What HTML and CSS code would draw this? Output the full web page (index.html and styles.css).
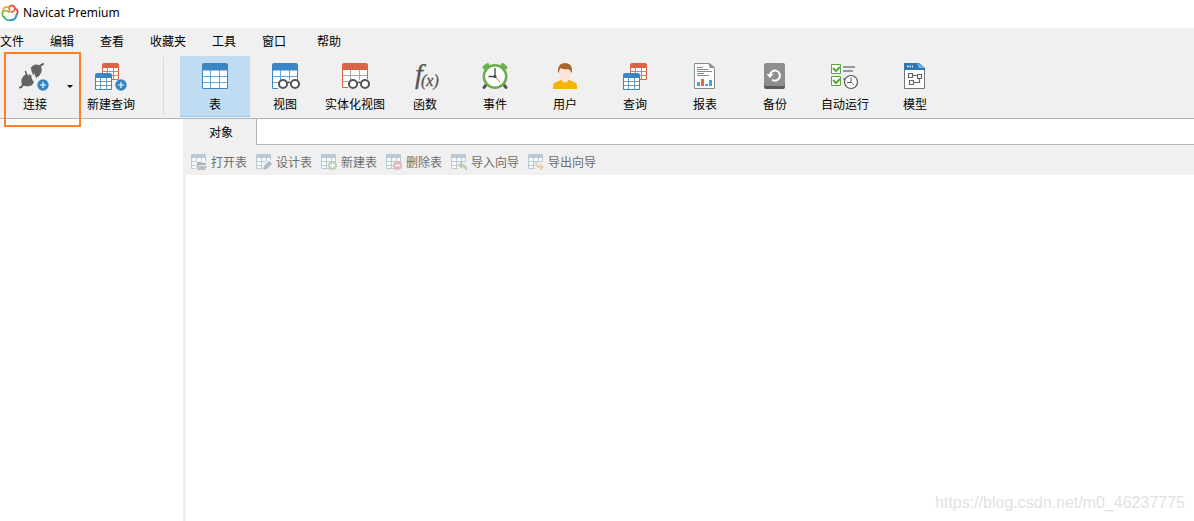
FILE: index.html
```html
<!DOCTYPE html>
<html lang="zh-CN">
<head>
<meta charset="utf-8">
<title>Navicat Premium</title>
<link rel="stylesheet" href="styles.css">
</head>
<body>
<svg class="sprite" aria-hidden="true">
  <symbol id="grid-blue" viewBox="0 0 26 26">
    <path fill="#fff" d="M0 2h26v24H0z"/>
    <path fill="none" stroke="#5babe2" d="M1 13.500h24M1 19.500h24M8.500 7v18M17.500 7v18"/>
    <path fill="none" stroke="#3b86c3" d="M.5 7v18.500h25V7"/>
    <path fill="#3b86c3" d="M0 7.500V2q0-2 2-2h22q2 0 2 2v5.500z"/>
  </symbol>
  <symbol id="mini-blue" viewBox="0 0 17 17">
    <path fill="#fff" d="M0 2h17v15H0z"/>
    <path fill="none" stroke="#4da2e0" d="M1 8.500h15M1 12.500h15M5.500 5v11M11.500 5v11"/>
    <path fill="none" stroke="#3b86c3" d="M.5 4v12.500h16V4"/>
    <path fill="#3b86c3" d="M0 5V2q0-2 2-2h13q2 0 2 2v3z"/>
  </symbol>
  <symbol id="mini-red" viewBox="0 0 17 17">
    <path fill="#fff" d="M0 2h17v15H0z"/>
    <path fill="none" stroke="#e07a5f" d="M1 8.500h15M1 12.500h15M5.500 5v11M11.500 5v11"/>
    <path fill="none" stroke="#d96445" d="M.5 4v12.500h16V4"/>
    <path fill="#d96445" d="M0 5V2q0-2 2-2h13q2 0 2 2v3z"/>
  </symbol>
  <symbol id="badge-plus" viewBox="0 0 12 12">
    <circle cx="6" cy="6" r="5.700" fill="#3385c6"/>
    <path stroke="#fff" stroke-width="1.200" d="M6 3v6M3 6h6"/>
  </symbol>
  <symbol id="glasses" viewBox="0 0 24 12">
    <g fill="#fff" stroke="#555" stroke-width="2"><circle cx="6" cy="6" r="4"/><circle cx="18" cy="6" r="4"/></g>
    <path fill="none" stroke="#555" stroke-width="1.500" d="M10 5q2-1.500 4 0M22 5h1M1 5h1"/>
  </symbol>
  <symbol id="grid-pale" viewBox="0 0 16 16">
    <path fill="#f7f8f9" d="M0 1h15v14H0z"/>
    <path fill="none" stroke="#bccad5" d="M.5 4v10.500H15M0 7.500h15M0 11.500h15M5.500 4v11M10.500 4v11M14.500 4v7"/>
    <path fill="#bccad5" d="M0 4V1q0-1 1-1h13q1 0 1 1v3z"/>
  </symbol>
</svg>

<header class="titlebar">
  <svg class="logo" viewBox="0 0 18 18" aria-hidden="true" fill="none" stroke-width="1.800" stroke-linecap="round">
    <path stroke="#e94f35" d="M8 3.500C9 .8 13.500 1 14 4.500"/>
    <path stroke="#f6a623" d="M2.500 7C1.500 3.500 6 1.500 8 4"/>
    <path stroke="#f08a2c" d="M8 4c1 1.500.500 3-.500 4"/>
    <path stroke="#d93a3a" d="M14 4.500c3 1 3.500 4 1.500 6.500"/>
    <path stroke="#7fbf3f" d="M2.500 7c-2 2-1.500 5 .500 6"/>
    <path stroke="#2fae7a" d="M3 13c1 3 5 4 7 3"/>
    <path stroke="#2c8ed6" d="M10 16c3 0 5-2 5.500-5"/>
    <path stroke="#8cc63f" stroke-width="1.300" d="M2.500 7c2-.500 4 0 5 1"/>
    <path stroke="#e9562f" stroke-width="1.300" d="M14 4.500c-.500 2-2 3.500-4 3.500"/>
  </svg>
  <span class="title">Navicat Premium</span>
</header>

<nav class="menubar">
  <button>文件</button>
  <button>编辑</button>
  <button>查看</button>
  <button>收藏夹</button>
  <button>工具</button>
  <button>窗口</button>
  <button class="menu-help">帮助</button>
</nav>

<div class="toolbar">
  <div class="connect-group">
    <button class="tool tool-connect">
      <svg class="icon" viewBox="0 0 32 28" aria-hidden="true">
        <g fill="#626262" stroke="#626262" stroke-linecap="round">
          <path fill="none" stroke-width="2" d="M1 25.500q2 0 3-3M20 6q1-3 4-4"/>
          <path stroke="none" d="M3 23q-2-6 2-9.500l3-1.500 7 8q-1 3-4 4-4 1-8-1z"/>
          <path fill="none" stroke-width="1.600" d="M8 13.500L6.500 9.500M12.500 17.500L10.500 13M10 15l2-1"/>
          <path stroke="none" d="M11.500 6q2-3 5-3.500 3-.500 5.500 1.500 1.500 4 0 7-1 3-4 4z"/>
          <path fill="none" stroke-width="1.600" d="M13 8l1.500 4M16.500 12l1 3"/>
        </g>
        <use href="#badge-plus" x="18" y="17" width="12" height="12"/>
      </svg>
      <span>连接</span>
    </button>
    <button class="drop" aria-label="连接选项"><svg class="caret" viewBox="0 0 6 3" aria-hidden="true"><path d="M0 0h6L3 3z"/></svg></button>
    <span class="highlight"></span>
  </div>
  <button class="tool">
    <svg class="icon" viewBox="0 0 32 28" aria-hidden="true">
      <use href="#mini-red" x="7" y="1" width="17" height="17"/>
      <use href="#mini-blue" x="0" y="11" width="17" height="17"/>
      <use href="#badge-plus" x="20" y="17" width="12" height="12"/>
    </svg>
    <span>新建查询</span>
  </button>
  <span class="separator"></span>
  <button class="tool selected">
    <svg class="icon" viewBox="0 0 32 28" aria-hidden="true"><use href="#grid-blue" x="3" y="1" width="26" height="26"/></svg>
    <span>表</span>
  </button>
  <button class="tool">
    <svg class="icon" viewBox="0 0 32 28" aria-hidden="true">
      <use href="#grid-blue" x="3" y="1" width="26" height="26"/>
      <path fill="#f0f0f0" d="M9 18h23v10H9z"/>
      <use href="#glasses" x="8" y="16" width="24" height="12"/>
    </svg>
    <span>视图</span>
  </button>
  <button class="tool">
    <svg class="icon" viewBox="0 0 32 28" aria-hidden="true">
      <path fill="#fff" d="M3 3h26v23H3z"/>
      <path fill="none" stroke="#a9a9a9" d="M4 13.500h24M4 19.500h24M11.500 8v18M20.500 8v18"/>
      <path fill="none" stroke="#d96445" d="M3.500 8v17.500H9M28.500 8v9"/>
      <path fill="#d96445" d="M3 8V3q0-2 2-2h22q2 0 2 2v5z"/>
      <path fill="#f0f0f0" d="M9 18h23v10H9z"/>
      <use href="#glasses" x="8" y="16" width="24" height="12"/>
    </svg>
    <span>实体化视图</span>
  </button>
  <button class="tool">
    <svg class="icon" viewBox="0 0 32 28" aria-hidden="true">
      <text class="fx-f" x="6" y="21">f</text>
      <text class="fx-x" x="12" y="24">(x)</text>
    </svg>
    <span>函数</span>
  </button>
  <button class="tool">
    <svg class="icon" viewBox="0 0 32 28" aria-hidden="true">
      <path stroke="#555" stroke-width="3" stroke-linecap="round" d="M7 23l-2 2.500M25 23l2 2.500"/>
      <path stroke="#72b255" stroke-width="4" stroke-linecap="round" d="M5.500 5.500l3-2.500M26.500 5.500l-3-2.500"/>
      <circle cx="16" cy="14.500" r="11.200" fill="#fff" stroke="#68ad49" stroke-width="2.500"/>
      <path stroke="#e85943" d="M16 14.500l5 5.500"/>
      <path fill="none" stroke="#444" stroke-width="1.300" d="M16 6v8.500H9.500"/>
      <circle cx="16" cy="14.500" r="1.500" fill="#444"/>
    </svg>
    <span>事件</span>
  </button>
  <button class="tool">
    <svg class="icon" viewBox="0 0 32 28" aria-hidden="true">
      <path fill="#f7b500" d="M4 27v-3q0-3 3-4l5-2h8l5 2q3 1 3 4v3z"/>
      <path fill="#fce4d6" d="M10 7h12.500v5q-.500 4-3.500 6v1q-3 3-6 0v-1q-3-2-3-6z"/>
      <path fill="#ad632c" d="M9 10V7q1-6 7-6t7 6v3l-1 1q0-3-3-4-4 1-7-1-2 1-2 5z"/>
    </svg>
    <span>用户</span>
  </button>
  <button class="tool">
    <svg class="icon" viewBox="0 0 32 28" aria-hidden="true">
      <use href="#mini-red" x="11" y="1" width="17" height="17"/>
      <use href="#mini-blue" x="4" y="11" width="17" height="17"/>
    </svg>
    <span>查询</span>
  </button>
  <button class="tool">
    <svg class="icon" viewBox="0 0 32 28" aria-hidden="true">
      <path fill="#fff" stroke="#8a8a8a" d="M5.500 1.500h15l5 4v21h-20z"/>
      <path fill="#8a8a8a" d="M19 1l7 5h-5z"/>
      <path stroke="#8a8a8a" d="M8 5.500h6M8 7.500h11M8 9.500h15M8 11.500h7M8 13.500h12"/>
      <path fill="#4aa0df" d="M8 20h3v4H8zM16 22h3v2h-3zM20 18h3v6h-3z"/>
      <path fill="#e8643f" d="M12 17h3v7h-3z"/>
    </svg>
    <span>报表</span>
  </button>
  <button class="tool">
    <svg class="icon" viewBox="0 0 32 28" aria-hidden="true">
      <rect x="5" y="4" width="21" height="23" rx="2" fill="#5b5b5b"/>
      <rect x="5" y="1" width="21" height="23" rx="2" fill="#8e8e8e"/>
      <path fill="none" stroke="#fff" stroke-width="2" d="M13 17.700a5 5 0 1 0-2-5"/>
      <path fill="#fff" d="M7.500 12h7l-3.500 4z"/>
    </svg>
    <span>备份</span>
  </button>
  <button class="tool">
    <svg class="icon" viewBox="0 0 32 28" aria-hidden="true">
      <path fill="#fff" stroke="#5fa53f" d="M2.500 2.500h9v9h-9zM2.500 14.500h9v9h-9z"/>
      <path fill="none" stroke="#5fa53f" stroke-width="2" d="M4 6l3 3 4-4M4 18l3 3 4-4"/>
      <path stroke="#999" stroke-width="2" d="M14 5h12M14 9h10M14 17h2"/>
      <circle cx="22" cy="20" r="6.500" fill="#fff" stroke="#555" stroke-width="1.200"/>
      <path fill="none" stroke="#555" d="M22 15.500v5h-4"/>
      <path stroke="#e85943" d="M22 20l3 3"/>
    </svg>
    <span>自动运行</span>
  </button>
  <button class="tool">
    <svg class="icon" viewBox="0 0 32 28" aria-hidden="true">
      <path fill="#fff" stroke="#777" d="M5.500 7v19.500h20V7"/>
      <path fill="#3078b4" d="M5 1h15l6 5v2H5z"/>
      <path fill="#75b7e7" d="M18 1l8 5h-6z"/>
      <path stroke="#fff" stroke-width="1.500" stroke-dasharray="1.500 1" d="M8 4.500h6"/>
      <path fill="none" stroke="#666" stroke-width="1.200" d="M9.500 11.500h4v4h-4zM18.500 12.500h4v4h-4zM10.500 18.500h4v4h-4zM13.500 13.500h5M20.500 16.500v4h-6"/>
    </svg>
    <span>模型</span>
  </button>
</div>

<main class="workspace">
  <aside class="sidebar"></aside>
  <section class="pane">
    <div class="tabs" role="tablist"><button class="tab" role="tab" aria-selected="true">对象</button></div>
    <div class="actions">
      <button>
        <svg class="small-icon" viewBox="0 0 16 16" aria-hidden="true"><use href="#grid-pale" width="16" height="16"/><path fill="#f0f0f0" d="M5 7h11v9H5z"/><path fill="#a9b5be" d="M6 8h4l1 1h4v2H8l-2 4z"/><path fill="#b5c1c9" d="M8 12h8l-2 4H6z"/></svg>
        <span>打开表</span>
      </button>
      <button>
        <svg class="small-icon" viewBox="0 0 16 16" aria-hidden="true"><use href="#grid-pale" width="16" height="16"/><path fill="#f0f0f0" d="M6 16v-5l6-5h4v10z"/><path fill="#aebdc8" d="M7 16l1-4 5-5 3 3-5 5z"/></svg>
        <span>设计表</span>
      </button>
      <button>
        <svg class="small-icon" viewBox="0 0 16 16" aria-hidden="true"><use href="#grid-pale" width="16" height="16"/><circle cx="11.500" cy="11.500" r="4.500" fill="#bfd2b4"/><path stroke="#fff" stroke-width="1.500" d="M9 11.500h5M11.500 9v5"/></svg>
        <span>新建表</span>
      </button>
      <button>
        <svg class="small-icon" viewBox="0 0 16 16" aria-hidden="true"><use href="#grid-pale" width="16" height="16"/><circle cx="11.500" cy="11.500" r="4.500" fill="#e3b9b5"/><path stroke="#fff" stroke-width="1.500" d="M9 11.500h5"/></svg>
        <span>删除表</span>
      </button>
      <button>
        <svg class="small-icon" viewBox="0 0 16 16" aria-hidden="true"><use href="#grid-pale" width="16" height="16"/><path fill="#f0f0f0" d="M7 8h9v8H7z"/><path fill="#b8d0ad" d="M7 11l4-4v3q5 0 5 6h-2q0-3-3-3v2z"/></svg>
        <span>导入向导</span>
      </button>
      <button>
        <svg class="small-icon" viewBox="0 0 16 16" aria-hidden="true"><use href="#grid-pale" width="16" height="16"/><path fill="#f0f0f0" d="M7 8h9v8H7z"/><path fill="#ecd0a5" d="M16 13l-4-4v3q-3 0-3-4H7q0 6 5 6v3z"/></svg>
        <span>导出向导</span>
      </button>
    </div>
    <div class="content"><span class="watermark">https://blog.csdn.net/m0_46237775</span></div>
  </section>
</main>
</body>
</html>
```
FILE: styles.css
```css
* { box-sizing: border-box; }

body {
  display: flex;
  flex-direction: column;
  min-height: 100vh;
  margin: 0;
  background: #fff;
  color: #000;
  font: 12px/16px "Noto Sans CJK SC", sans-serif;
}

button {
  margin: 0;
  padding: 0;
  border: 0;
  background: none;
  color: inherit;
  font: inherit;
  white-space: nowrap;
}

svg { display: block; }
.sprite { position: absolute; width: 0; height: 0; }

.titlebar {
  display: flex;
  align-items: center;
  gap: 4px;
  height: 28px;
  padding: 0 0 2px 1px;
}
.logo { width: 18px; height: 18px; }
.title { font-family: "Noto Sans", sans-serif; }

.menubar {
  display: flex;
  gap: 26px;
  height: 28px;
  padding-bottom: 2px;
  background: #f0f0f0;
}
.menu-help { margin-left: 5px; }

.toolbar {
  display: flex;
  height: 63px;
  padding-bottom: 1px;
  border-bottom: 1px solid #b4b4b4;
  background: #f0f0f0;
}
.connect-group { position: relative; display: flex; padding-left: 6px; }
.tool {
  display: flex;
  flex: none;
  flex-direction: column;
  align-items: center;
  gap: 6px;
  width: 70px;
  padding-top: 6px;
}
.tool-connect { width: 58px; }
.selected { border-bottom: 1px solid #90c8f6; background: #c0dcf3; }
.icon { width: 32px; height: 28px; overflow: visible; }
.drop { display: flex; align-items: center; justify-content: center; width: 12px; }
.caret { width: 6px; height: 3px; }
.highlight {
  position: absolute;
  top: -4px;
  left: 4px;
  width: 77px;
  height: 75px;
  border: 2px solid #ff7f27;
  pointer-events: none;
}
.separator { width: 1px; margin: 1px 16px 2px 17px; background: #d9d9d9; }

.fx-f { font: italic 28px "Liberation Serif", serif; fill: #555; stroke: #555; stroke-width: 0.3px; }
.fx-x { font: italic 16px "Liberation Serif", serif; fill: #555; stroke: #555; stroke-width: 0.3px; }

.workspace { display: flex; flex: 1; }
.sidebar { width: 183px; }
.pane {
  display: flex;
  flex: 1;
  flex-direction: column;
  border-left: 3px solid #f0f0f0;
}
.tabs { display: flex; height: 26px; border-bottom: 1px solid #b4b4b4; }
.tab {
  width: 71px;
  height: 26px;
  border-right: 1px solid #b4b4b4;
  background: #f0f0f0;
}
.actions {
  display: flex;
  gap: 9px;
  height: 30px;
  padding: 4px 0 0 5px;
  background: #f0f0f0;
  color: #6d6d6d;
}
.actions button { display: flex; align-items: center; gap: 4px; }
.small-icon { width: 16px; height: 16px; }
.content {
  display: flex;
  flex: 1;
  align-items: flex-end;
  justify-content: flex-end;
  padding: 0 9px 8px;
}
.watermark { font: 16px/20px "Liberation Sans", sans-serif; color: #e2e2e2; }
```
